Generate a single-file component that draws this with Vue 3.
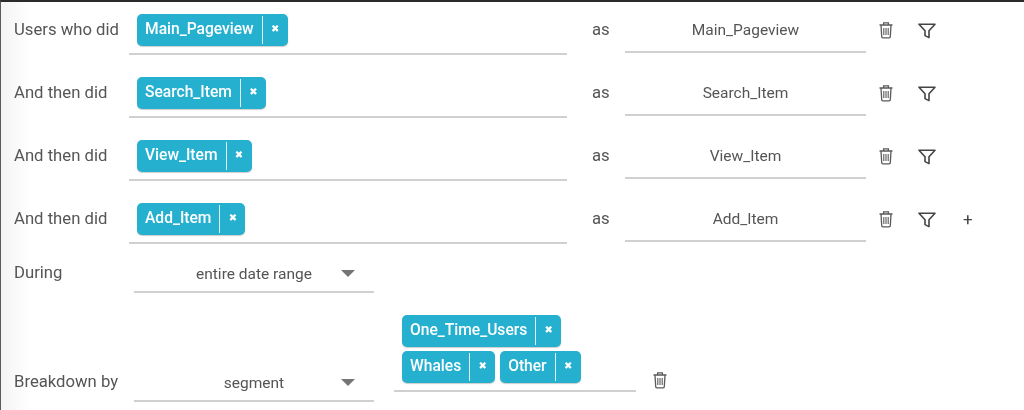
<script setup>
const funnel = [
  { label: 'Users who did', chip: 'Main_Pageview', plus: false },
  { label: 'And then did', chip: 'Search_Item', plus: false },
  { label: 'And then did', chip: 'View_Item', plus: false },
  { label: 'And then did', chip: 'Add_Item', plus: true },
]
const segments = [['One_Time_Users'], ['Whales', 'Other']]
</script>

<template>
  <div class="page">
    <div v-for="(row, i) in funnel" :key="i" class="row">
      <div class="label">{{ row.label }}</div>
      <div class="field">
        <span class="chip">
          <span class="chip-text">{{ row.chip }}</span>
          <span class="chip-x">✖</span>
        </span>
      </div>
      <div class="as">as</div>
      <div class="alias">{{ row.chip }}</div>
      <svg class="trash" width="16" height="18" viewBox="0 0 16 18" fill="none" stroke="#5a5a5a" stroke-width="1.3">
        <path d="M1.5 4h13M5.6 3.6V1.8h4.8v1.8M3 4l.7 11.6c0 .8.5 1.3 1.2 1.3h6.2c.7 0 1.2-.5 1.2-1.3L13 4" />
        <path d="M5.8 7v7M8 7v7M10.2 7v7" stroke-width="1.1" />
      </svg>
      <svg class="filter" width="18" height="16" viewBox="0 0 18 16" fill="none" stroke="#444" stroke-width="1.6" stroke-linejoin="round">
        <path d="M1 1.2h16l-6 6.6v6.8l-4-2V7.8z" />
      </svg>
      <span v-if="row.plus" class="plus">+</span>
    </div>

    <div class="row-during">
      <div class="label">During</div>
      <div class="select">
        <span class="select-text">entire date range</span>
        <span class="caret"></span>
      </div>
    </div>

    <div class="row-breakdown">
      <div class="label">Breakdown by</div>
      <div class="select">
        <span class="select-text">segment</span>
        <span class="caret"></span>
      </div>
      <div class="seg-field">
        <div v-for="(line, i) in segments" :key="i" class="seg-line">
          <span v-for="s in line" :key="s" class="chip">
            <span class="chip-text">{{ s }}</span>
            <span class="chip-x">✖</span>
          </span>
        </div>
      </div>
      <svg class="trash seg-trash" width="16" height="18" viewBox="0 0 16 18" fill="none" stroke="#5a5a5a" stroke-width="1.3">
        <path d="M1.5 4h13M5.6 3.6V1.8h4.8v1.8M3 4l.7 11.6c0 .8.5 1.3 1.2 1.3h6.2c.7 0 1.2-.5 1.2-1.3L13 4" />
        <path d="M5.8 7v7M8 7v7M10.2 7v7" stroke-width="1.1" />
      </svg>
    </div>
  </div>
</template>

<style>
html, body { margin: 0; background: #fff; overflow: hidden; }
</style>

<style scoped>
.page {
  box-sizing: border-box;
  width: 1024px;
  height: 410px;
  border-top: 2px solid #2b2b2b;
  border-left: 1px solid #5a5a5a;
  padding-left: 13px;
  font-family: Roboto, "Liberation Sans", sans-serif;
  font-size: 15.5px;
  color: #555;
  background: linear-gradient(90deg, #f4f4f4 0, #fff 30px);
  overflow: hidden;
  filter: blur(0.35px);
}
.row {
  display: flex;
  align-items: flex-start;
  height: 63px;
}
.label {
  width: 115px;
  flex: none;
  font-size: 16.7px;
  line-height: 20px;
  padding-top: 18px;
}
.field {
  box-sizing: border-box;
  width: 438px;
  height: 53px;
  flex: none;
  padding: 12px 0 0 8px;
  border-bottom: 2px solid #d0d0d0;
}
.chip {
  display: inline-flex;
  align-items: center;
  box-sizing: border-box;
  height: 32px;
  background: #26b0cf;
  border-radius: 5px;
  box-shadow: 0 1px 1px rgba(0, 0, 0, 0.2);
  color: #fff;
  font-size: 15.6px;
  font-weight: 500;
}
.chip-text {
  padding: 0 8px 0 8px;
  height: 28px;
  line-height: 27px;
  border-right: 1.5px solid #dff3f8;
  margin-bottom: 1px;
}
.chip-x {
  width: 25px;
  text-align: center;
  font-size: 10px;
  margin-bottom: 4px;
  font-family: "DejaVu Sans", sans-serif;
}
.as {
  width: 33px;
  margin-left: 25px;
  flex: none;
  font-size: 16.7px;
  line-height: 20px;
  padding-top: 18px;
}
.alias {
  box-sizing: border-box;
  width: 241px;
  height: 51px;
  flex: none;
  padding-top: 18px;
  line-height: 20px;
  text-align: center;
  border-bottom: 2px solid #d0d0d0;
}
.trash {
  flex: none;
  margin: 19px 0 0 12px;
}
.filter {
  flex: none;
  margin: 21px 0 0 24px;
}
.plus {
  margin: 16px 0 0 27px;
  font-size: 17px;
  line-height: 24px;
  color: #444;
}
.row-during {
  display: flex;
  height: 41px;
  margin-top: -2px;
}
.row-during .label {
  width: 120px;
  padding-top: 11px;
}
.select {
  position: relative;
  box-sizing: border-box;
  width: 240px;
  height: 41px;
  flex: none;
  border-bottom: 2px solid #d0d0d0;
  padding-top: 12px;
  line-height: 20px;
}
.select-text {
  display: block;
  width: 240px;
  text-align: center;
}
.caret {
  position: absolute;
  left: 207px;
  top: 18px;
  width: 0;
  height: 0;
  border-left: 7px solid transparent;
  border-right: 7px solid transparent;
  border-top: 7px solid #757575;
}
.row-breakdown {
  display: flex;
  align-items: flex-end;
  height: 109px;
}
.row-breakdown .label {
  width: 120px;
  padding: 0 0 10px;
}
.row-breakdown .select {
  height: 45px;
  padding-top: 16px;
}
.row-breakdown .caret {
  top: 22px;
}
.seg-field {
  box-sizing: border-box;
  width: 242px;
  margin: 0 0 10px 20px;
  padding: 0 0 7px 8px;
  border-bottom: 2px solid #d0d0d0;
  display: flex;
  flex-direction: column;
  gap: 4px;
  flex: none;
}
.seg-line {
  display: flex;
  gap: 5px;
}
.seg-trash {
  margin: 0 0 13px 16px;
}
</style>
